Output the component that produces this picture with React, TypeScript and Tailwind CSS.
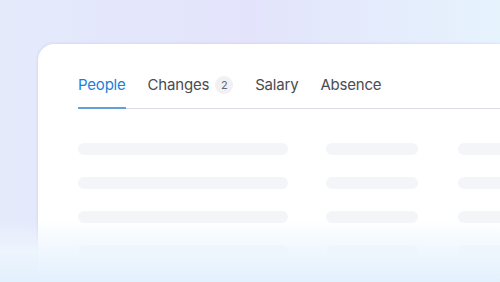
const tabs = [
  { label: "People", active: true },
  { label: "Changes", badge: "2" },
  { label: "Salary" },
  { label: "Absence" },
];

const rows = [0, 1, 2, 3];

export default function App() {
  return (
    <div
      className="relative w-[500px] h-[282px] overflow-hidden bg-gradient-to-r from-[#e5eafb] via-[#e3e4fb] to-[#e6f3fd] pl-[38px] pt-[44px]"
      style={{ fontFamily: "Inter, 'Noto Sans', sans-serif" }}
    >
      <div className="h-full bg-white rounded-tl-[16px] shadow-[0_0_3px_rgba(120,130,190,0.25)] pl-[40px] pt-[29px]">
        <div className="flex items-end gap-[22px] border-b border-[#dcdde2]">
          {tabs.map((t) => (
            <div
              key={t.label}
              className={
                "flex items-center gap-[6px] pb-[10px] text-[15px] leading-[24px] tracking-[-0.2px] -mb-px border-b-2 " +
                (t.active ? "text-[#1b7fd7] border-[#64a0d8]" : "text-[#4b4b50] border-transparent")
              }
            >
              {t.label}
              {t.badge && (
                <span className="flex items-center justify-center w-[18px] h-[18px] rounded-full bg-[#f1f1f3] text-[11px] text-[#66666b]">
                  {t.badge}
                </span>
              )}
            </div>
          ))}
        </div>
        <div className="flex flex-col gap-[22px] pt-[34px]">
          {rows.map((r) => (
            <div key={r} className="flex">
              <div className="shrink-0 w-[210px] h-[12px] rounded-full bg-[#f4f5f9]" />
              <div className="shrink-0 ml-[38px] w-[92px] h-[12px] rounded-full bg-[#f4f5f9]" />
              <div className="shrink-0 ml-[40px] w-[92px] h-[12px] rounded-full bg-[#f4f5f9]" />
            </div>
          ))}
        </div>
      </div>
      <div className="absolute inset-x-0 bottom-0 h-[62px] bg-gradient-to-b from-[#f2f8fe]/0 via-[#eef6fe]/90 to-[#e3f0fd]" />
    </div>
  );
}
